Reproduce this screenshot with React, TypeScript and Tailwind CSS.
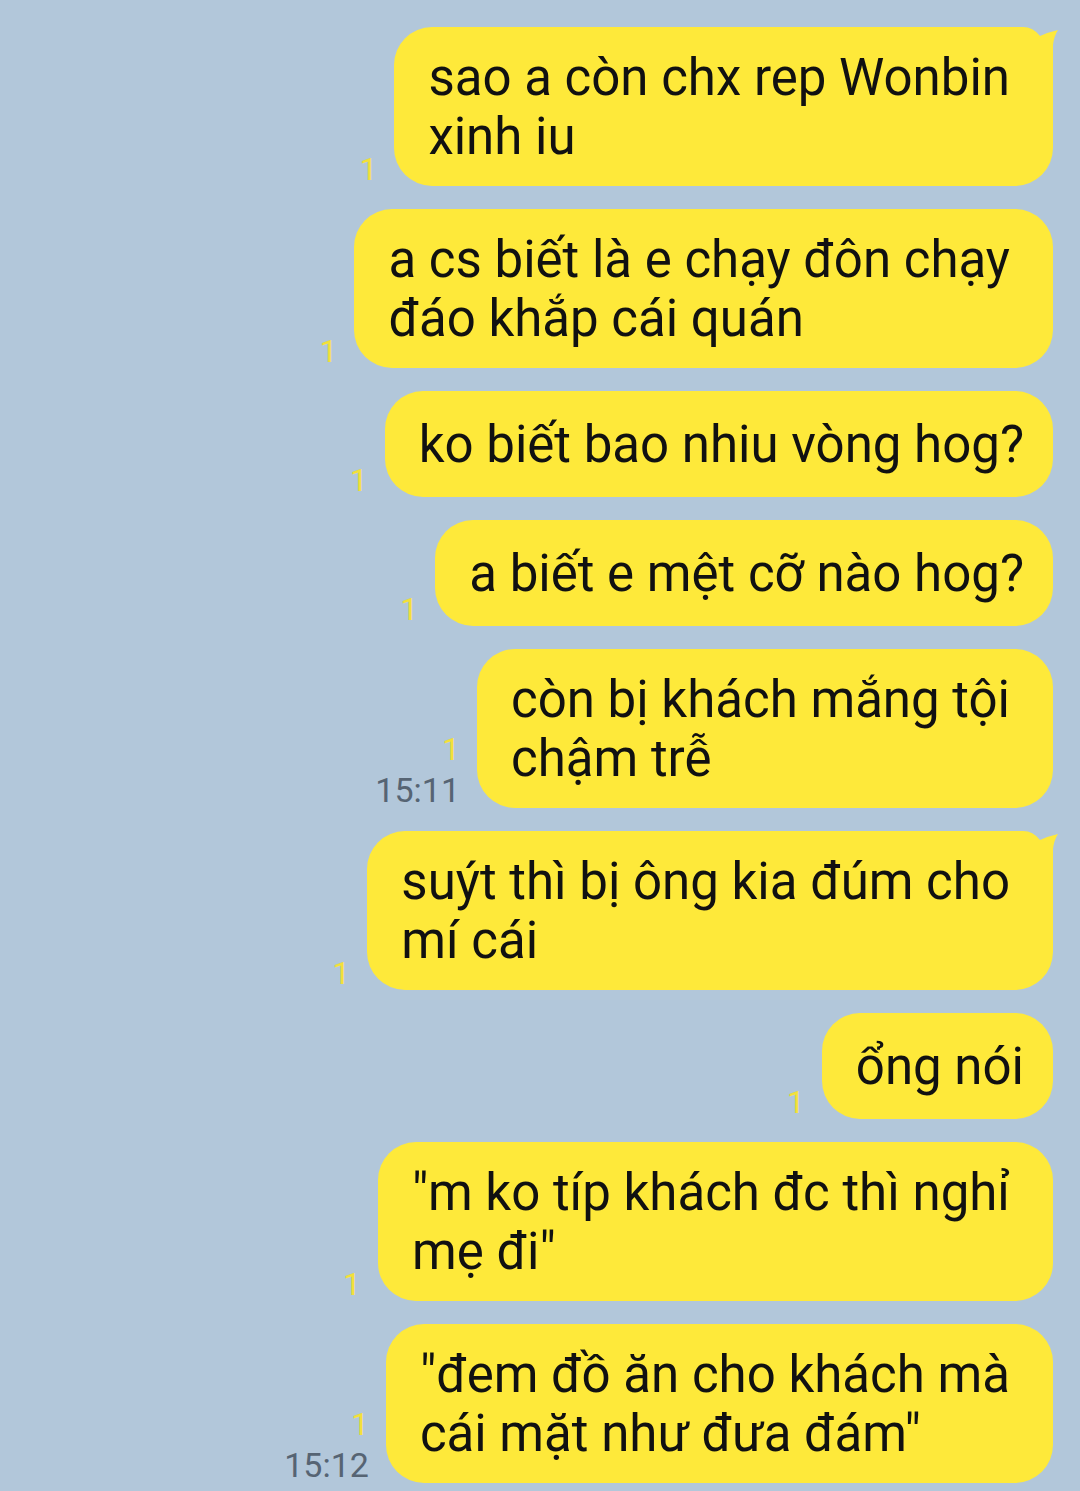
import React from 'react';

interface Msg {
  lines: string[];
  time?: string;
  tail?: boolean;
}

const messages: Msg[] = [
  { lines: ['sao a còn chx rep Wonbin', 'xinh iu'], tail: true },
  { lines: ['a cs biết là e chạy đôn chạy', 'đáo khắp cái quán'] },
  { lines: ['ko biết bao nhiu vòng hog?'] },
  { lines: ['a biết e mệt cỡ nào hog?'] },
  { lines: ['còn bị khách mắng tội', 'chậm trễ'], time: '15:11' },
  { lines: ['suýt thì bị ông kia đúm cho', 'mí cái'], tail: true },
  { lines: ['ổng nói'] },
  { lines: ['"m ko típ khách đc thì nghỉ', 'mẹ đi"'] },
  { lines: ['"đem đồ ăn cho khách mà', 'cái mặt như đưa đám"'], time: '15:12' },
];

// little ear on the first bubble of a group
const Tail = () => (
  <svg
    className="absolute top-0 right-[-6px]"
    width="46"
    height="42"
    viewBox="-40 0 46 42"
  >
    <path
      d="M-40 0 L-30 0 Q-20 0 -13 9 Q-4 5 5 3 Q1 9 0 18 L0 42 L-40 42 Z"
      fill="#fee93a"
    />
  </svg>
);

const Bubble = ({ msg }: { msg: Msg }) => {
  const multi = msg.lines.length > 1;
  return (
    <div className="flex items-end gap-[17px]">
      <div className="flex flex-col items-end gap-[8px] pb-[1px]">
        <span className="text-[32px] leading-none text-[#f2e03a]">1</span>
        {msg.time && (
          <span className="text-[34px] leading-none text-[#566473]">{msg.time}</span>
        )}
      </div>
      <div
        className={`relative flex min-h-[106px] flex-col justify-center rounded-[38px] bg-[#fee93a] pl-[34px] py-[20.5px] text-[51px] leading-[59px] text-[#111] whitespace-nowrap ${
          multi ? 'pr-[43px]' : 'pr-[29px]'
        }`}
      >
        {msg.tail && <Tail />}
        {msg.lines.map((l, i) => (
          <div key={i} className="relative">
            {l}
          </div>
        ))}
      </div>
    </div>
  );
};

export default function App() {
  return (
    <div
      className="w-[1080px] h-[1491px] overflow-hidden bg-[#b2c7da] flex flex-col items-end gap-[23px] pt-[27px] pr-[27px]"
      style={{ fontFamily: 'Roboto, "Noto Sans", sans-serif' }}
    >
      {messages.map((m, i) => (
        <Bubble key={i} msg={m} />
      ))}
    </div>
  );
}
